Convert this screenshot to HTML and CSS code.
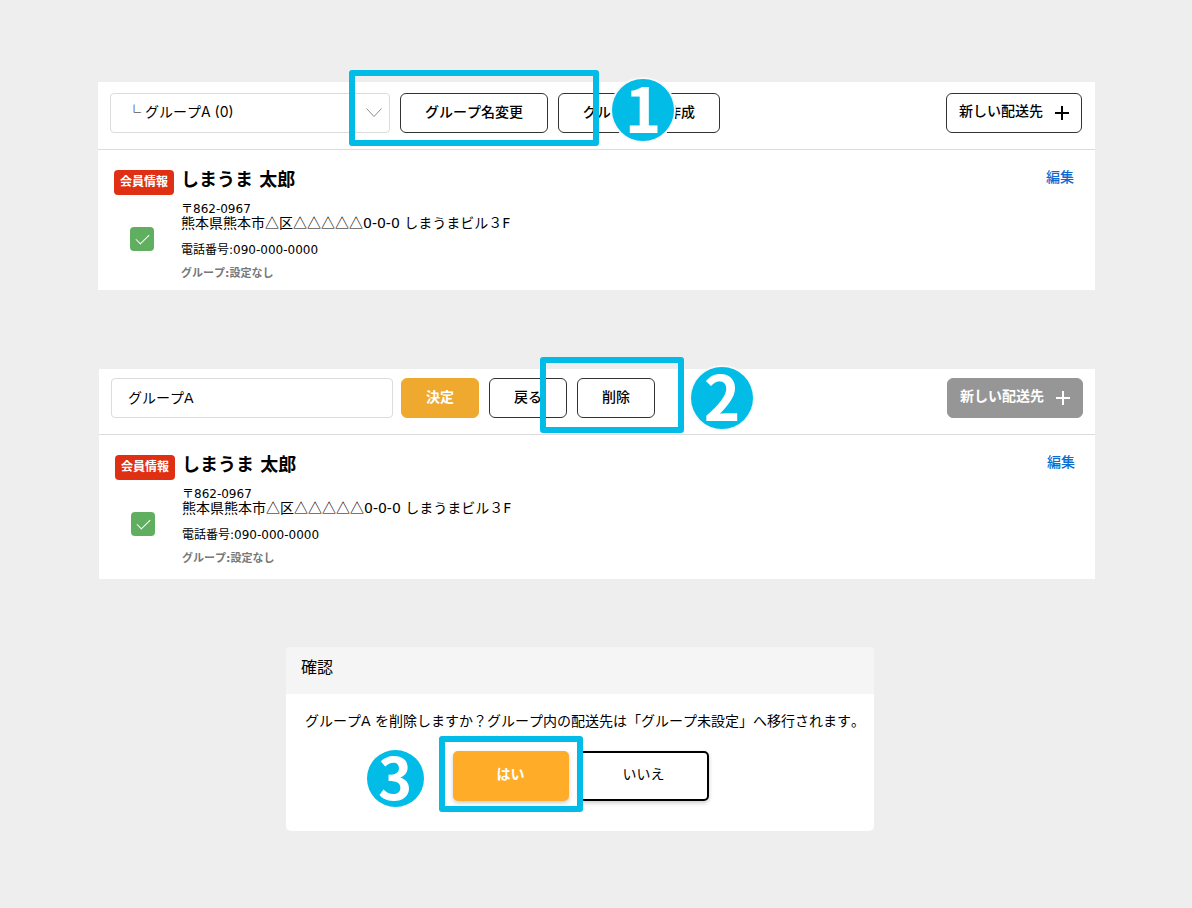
FILE: index.html
```html
<!DOCTYPE html>
<html lang="ja">
<head>
  <meta charset="UTF-8" />
  <meta name="viewport" content="width=device-width, initial-scale=1.0"/>
  <title>グループの削除</title>
  <link rel="stylesheet" href="styles.css">
</head>
<body>

  <!-- STEP 1 -->
  <section class="panel">
    <div class="toolbar">
      <div class="select-wrap">
        <select class="group-select" aria-label="グループ">
          <option>└ グループA (0)</option>
        </select>
        <svg class="chevron" viewBox="0 0 16 10" aria-hidden="true"><path d="M0.5 0.5 L8 8.5 L15.5 0.5"/></svg>
      </div>
      <div class="step">
        <button type="button" class="btn">グループ名変更</button>
        <span class="frame frame-rename"></span>
        <span class="number number-one">1</span>
      </div>
      <button type="button" class="btn">グループ新規作成</button>
      <button type="button" class="btn btn-new">新しい配送先
        <svg class="plus" viewBox="0 0 14 14" aria-hidden="true"><path d="M7 0V14M0 7H14"/></svg>
      </button>
    </div>
    <div class="entry">
      <div class="entry-side">
        <span class="badge">会員情報</span>
        <input type="checkbox" class="check" aria-label="しまうま 太郎を選択" checked>
      </div>
      <div class="entry-info">
        <h2 class="name">しまうま 太郎</h2>
        <p class="zip">〒862-0967</p>
        <p class="address"><span class="marks">熊本県熊本市△区△△△△△</span>0-0-0 しまうまビル３F</p>
        <p class="tel">電話番号:090-000-0000</p>
        <p class="group">グループ:設定なし</p>
      </div>
      <a class="edit" href="#">編集</a>
    </div>
  </section>

  <!-- STEP 2 -->
  <section class="panel panel-edit">
    <div class="toolbar">
      <input type="text" class="group-name" aria-label="グループ名" value="グループA">
      <button type="button" class="btn btn-primary">決定</button>
      <button type="button" class="btn">戻る</button>
      <div class="step">
        <button type="button" class="btn">削除</button>
        <span class="frame frame-delete"></span>
        <span class="number number-two">2</span>
      </div>
      <button type="button" class="btn btn-new" disabled>新しい配送先
        <svg class="plus" viewBox="0 0 14 14" aria-hidden="true"><path d="M7 0V14M0 7H14"/></svg>
      </button>
    </div>
    <div class="entry">
      <div class="entry-side">
        <span class="badge">会員情報</span>
        <input type="checkbox" class="check" aria-label="しまうま 太郎を選択" checked>
      </div>
      <div class="entry-info">
        <h2 class="name">しまうま 太郎</h2>
        <p class="zip">〒862-0967</p>
        <p class="address"><span class="marks">熊本県熊本市△区△△△△△</span>0-0-0 しまうまビル３F</p>
        <p class="tel">電話番号:090-000-0000</p>
        <p class="group">グループ:設定なし</p>
      </div>
      <a class="edit" href="#">編集</a>
    </div>
  </section>

  <!-- STEP 3 -->
  <section class="dialog">
    <h2 class="dialog-title">確認</h2>
    <div class="dialog-body">
      <p class="dialog-text">グループA を削除しますか？グループ内の配送先は「グループ未設定」へ移行されます。</p>
      <div class="dialog-buttons">
        <div class="step">
          <button type="button" class="answer answer-yes">はい</button>
          <span class="frame frame-yes"></span>
          <span class="number number-three">3</span>
        </div>
        <button type="button" class="answer answer-no">いいえ</button>
      </div>
    </div>
  </section>

</body>
</html>
```
FILE: styles.css
```css
* {
  box-sizing: border-box;
}

body {
  margin: 0;
  padding: 82px 97px 77px 98px;
  background-color: #eeeeee;
  color: #000;
  font-family: "DejaVu Sans", "Noto Sans CJK JP", sans-serif;
  font-size: 14px;
  font-kerning: none;
}

h2, p {
  margin: 0;
}

button, input, select {
  font-family: inherit;
  font-size: 14px;
  font-kerning: none;
  color: #000;
}

.panel {
  background-color: #fff;
  margin-bottom: 79px;
}

.panel-edit {
  margin-left: 1px;
  margin-bottom: 68px;
}

/* toolbar */
.toolbar {
  display: flex;
  gap: 10px;
  padding: 11px 13px 16px 12px;
  border-bottom: 1px solid #dcdcdc;
}

.panel-edit .toolbar {
  padding-top: 9px;
  padding-right: 12px;
}

.select-wrap {
  position: relative;
}

.group-select {
  appearance: none;
  width: 280px;
  height: 40px;
  padding: 0 40px 4px 16px;
  border: 1px solid #dcdcdc;
  border-radius: 4px;
  background-color: #fff;
  font-family: Inter, "Noto Sans CJK JP", sans-serif;
}

.chevron {
  position: absolute;
  right: 8px;
  top: 15px;
  width: 16px;
  height: 10px;
  fill: none;
  stroke: #8c8c8c;
  pointer-events: none;
}

.group-name {
  width: 282px;
  height: 40px;
  margin-right: -2px;
  padding: 0 16px 2px;
  border: 1px solid #dcdcdc;
  border-radius: 4px;
}

.btn {
  height: 40px;
  padding: 0 24px 4px;
  border: 1px solid #333;
  border-radius: 6px;
  background-color: #fff;
  font-weight: 500;
  white-space: nowrap;
}

.btn-primary {
  border-color: #f0a92f;
  background-color: #f0a92f;
  color: #fff;
  font-weight: 700;
}

.btn-new {
  display: flex;
  align-items: center;
  gap: 12px;
  margin-left: auto;
  padding: 0 12px 6px;
}

.btn-new:disabled {
  border-color: #969696;
  background-color: #969696;
  color: #fff;
  font-weight: 700;
}

.plus {
  width: 14px;
  height: 14px;
  margin-top: 6px;
  stroke: currentColor;
  stroke-width: 2;
}

/* address entry */
.entry {
  display: flex;
  gap: 7px;
  padding: 17px 21px 9px 16px;
}

.panel-edit .entry {
  padding-right: 20px;
  padding-bottom: 13px;
}

.entry-side {
  width: 60px;
  padding-top: 3px;
}

.badge {
  display: block;
  height: 25px;
  border-radius: 4px;
  background-color: #df3014;
  color: #fff;
  font-size: 12px;
  font-weight: 700;
  line-height: 24px;
  text-align: center;
}

.check {
  appearance: none;
  display: grid;
  place-items: center;
  width: 24px;
  height: 24px;
  margin: 32px 0 0 16px;
  border-radius: 4px;
  background-color: #60ae5f;
}

.check:checked::before {
  content: "";
  width: 12px;
  height: 6px;
  margin-bottom: 4px;
  border-left: 1px solid #fff;
  border-bottom: 1px solid #fff;
  transform: rotate(-45deg);
}

.entry-info {
  flex: 1;
  line-height: 14px;
}

.name {
  margin-bottom: 9px;
  font-size: 18px;
  line-height: 26px;
}

.zip, .tel {
  font-size: 12px;
}

.marks {
  font-family: "Noto Sans CJK JP", sans-serif;
  line-height: 0;
}

.tel {
  margin-top: 13px;
}

.group {
  margin-top: 10px;
  color: #777;
  font-size: 11px;
  font-weight: 700;
}

.edit {
  color: #0b6bd0;
  font-weight: 500;
  line-height: 20px;
  text-decoration: none;
}

/* step markers */
.step {
  position: relative;
  z-index: 1;
}

.frame {
  position: absolute;
  border: 6px solid #00bce6;
  border-radius: 3px;
  pointer-events: none;
}

.frame-rename {
  inset: -23px -51px -13px;
}

.frame-delete {
  inset: -21px -29px -15px -37px;
}

.frame-yes {
  inset: -15px -14px -11px;
}

.number {
  position: absolute;
  width: 62px;
  height: 62px;
  border-radius: 50%;
  background-color: #00bce6;
  box-shadow: 0 0 0 2px #f8f8f8;
  color: #fff;
  font-family: "Noto Sans CJK JP", sans-serif;
  font-size: 62px;
  font-weight: 700;
  line-height: 54px;
  text-align: center;
}

.number-one {
  left: 212px;
  top: -14px;
}

.number-two {
  left: 114px;
  top: -11px;
}

.number-three {
  left: -86px;
  top: -1px;
  width: 57px;
  height: 57px;
  box-shadow: none;
  font-size: 58px;
  line-height: 50px;
}

/* dialog */
.dialog {
  max-width: 588px;
  margin-left: 188px;
  border-radius: 5px;
  background-color: #fff;
}

.dialog-title {
  padding: 9px 15px 14px;
  border-radius: 5px 5px 0 0;
  background-color: #f5f5f5;
  font-size: 16px;
  font-weight: 400;
  line-height: 24px;
}

.dialog-body {
  padding: 17px 4px 30px 19px;
}

.dialog-text {
  line-height: 20px;
}

.dialog-buttons {
  display: flex;
  justify-content: center;
  gap: 10px;
  margin-top: 20px;
  padding-right: 14px;
}

.answer {
  height: 50px;
  padding: 0 42px 6px;
  border: 2px solid #000;
  border-radius: 5px;
  background-color: #fff;
  box-shadow: 0 2px 4px rgba(0, 0, 0, 0.2);
}

.answer-yes {
  border-color: #ffac28;
  background-color: #ffac28;
  color: #fff;
  font-weight: 700;
}
```
